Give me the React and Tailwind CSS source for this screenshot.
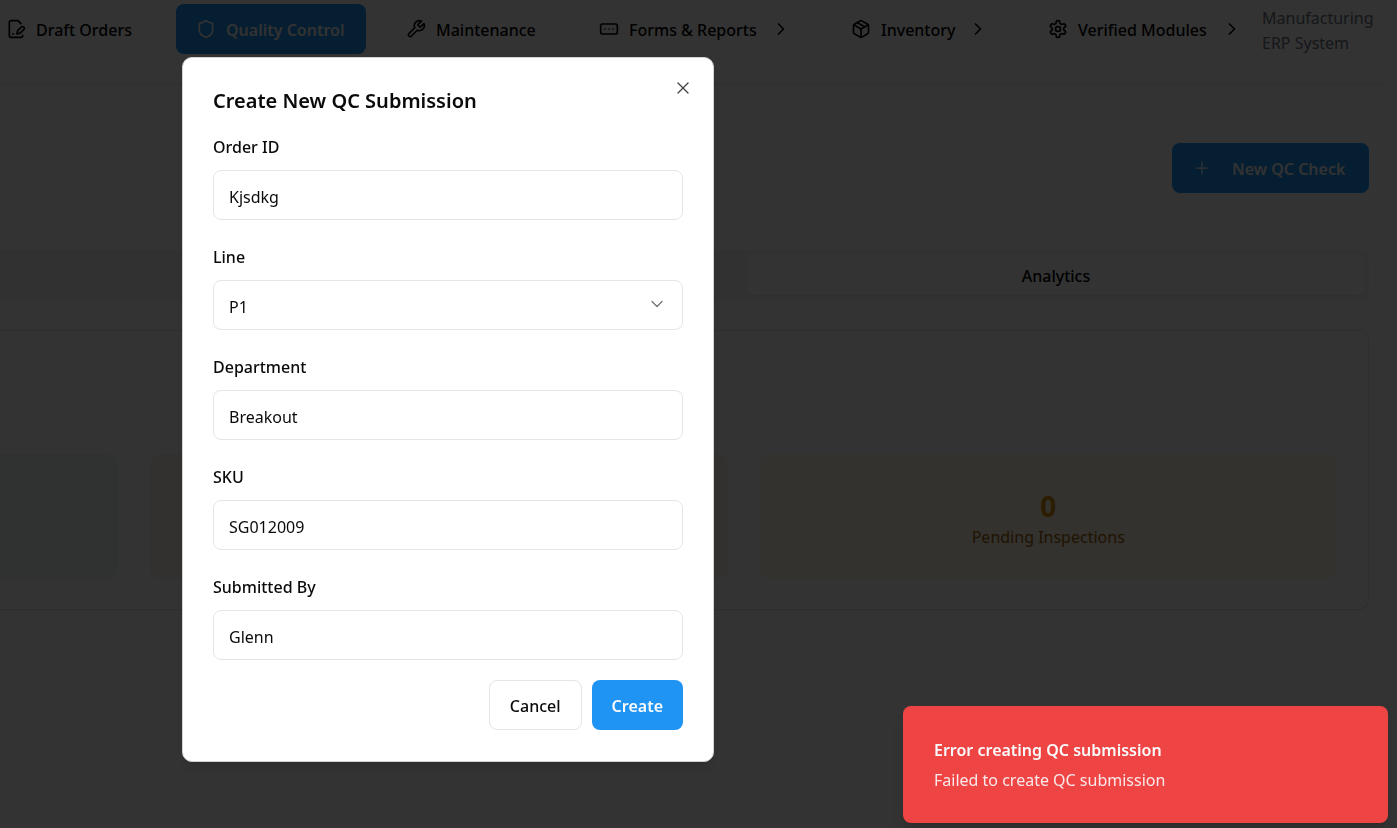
import { useState } from "react";
import { Shield, RectangleEllipsis, Package, ChevronRight, ChevronDown, Plus, X } from "lucide-react";

function OutlineIcon({ className, children }) {
  return (
    <svg
      className={className}
      viewBox="0 0 24 24"
      fill="none"
      stroke="currentColor"
      strokeWidth="2"
      strokeLinecap="round"
      strokeLinejoin="round"
      aria-hidden="true"
    >
      {children}
    </svg>
  );
}

function DraftIcon({ className }) {
  return (
    <OutlineIcon className={className}>
      <path d="M20 19.5v.5a2 2 0 0 1-2 2H6a2 2 0 0 1-2-2V4a2 2 0 0 1 2-2h8.5L18 5.5" />
      <path d="M8 18h1" />
      <path d="M18.42 9.61a2.1 2.1 0 1 1 2.97 2.97L16.95 17 13 18l.99-3.95 4.43-4.44Z" />
    </OutlineIcon>
  );
}

function WrenchIcon({ className }) {
  return (
    <OutlineIcon className={className}>
      <path d="M14.7 6.3a1 1 0 0 0 0 1.4l1.6 1.6a1 1 0 0 0 1.4 0l3.77-3.77a6 6 0 0 1-7.94 7.94l-6.91 6.91a2.12 2.12 0 0 1-3-3l6.91-6.91a6 6 0 0 1 7.94-7.94l-3.76 3.76z" />
    </OutlineIcon>
  );
}

function GearIcon({ className }) {
  return (
    <OutlineIcon className={className}>
      <path d="M12.22 2h-.44a2 2 0 0 0-2 2v.18a2 2 0 0 1-1 1.73l-.43.25a2 2 0 0 1-2 0l-.15-.08a2 2 0 0 0-2.73.73l-.22.38a2 2 0 0 0 .73 2.73l.15.1a2 2 0 0 1 1 1.72v.51a2 2 0 0 1-1 1.74l-.15.09a2 2 0 0 0-.73 2.73l.22.38a2 2 0 0 0 2.73.73l.15-.08a2 2 0 0 1 2 0l.43.25a2 2 0 0 1 1 1.73V20a2 2 0 0 0 2 2h.44a2 2 0 0 0 2-2v-.18a2 2 0 0 1 1-1.73l.43-.25a2 2 0 0 1 2 0l.15.08a2 2 0 0 0 2.73-.73l.22-.39a2 2 0 0 0-.73-2.73l-.15-.08a2 2 0 0 1-1-1.74v-.5a2 2 0 0 1 1-1.74l.15-.09a2 2 0 0 0 .73-2.73l-.22-.38a2 2 0 0 0-2.73-.73l-.15.08a2 2 0 0 1-2 0l-.43-.25a2 2 0 0 1-1-1.73V4a2 2 0 0 0-2-2z" />
      <circle cx="12" cy="12" r="3" />
    </OutlineIcon>
  );
}

const navItems = [
  { label: "Draft Orders", icon: DraftIcon, width: "min-w-[170px]" },
  { label: "Quality Control", icon: Shield, width: "min-w-[190px]", active: true },
  { label: "Maintenance", icon: WrenchIcon, width: "min-w-[173px]" },
  { label: "Forms & Reports", icon: RectangleEllipsis, width: "min-w-[232px]", expandable: true },
  { label: "Inventory", icon: Package, width: "min-w-[177px]", expandable: true },
  { label: "Verified Modules", icon: GearIcon, width: "min-w-[234px]", expandable: true },
];

function NavItem({ label, icon: Icon, width, active, expandable }) {
  return (
    <a
      href="#"
      aria-current={active ? "page" : undefined}
      className={`flex h-[50px] shrink-0 items-center gap-[10px] rounded-[8px] px-5 ${width} ${
        active ? "bg-[#2094f3] font-semibold text-gray-50" : "font-medium text-black"
      }`}
    >
      <Icon className="size-5 shrink-0" />
      <span className="pt-[2px] whitespace-nowrap">{label}</span>
      {expandable && <ChevronRight className="ml-auto size-5 shrink-0" />}
    </a>
  );
}

function Header() {
  return (
    <header className="mr-2 flex h-[85px] items-start overflow-hidden border-b border-[#ebebeb] pt-1">
      <nav aria-label="Main" className="-ml-[14px] flex shrink-0 gap-5">
        {navItems.map((item) => (
          <NavItem key={item.label} {...item} />
        ))}
      </nav>
      <p className="w-[120px] shrink-0 pt-[2px] leading-[25px] text-gray-500">Manufacturing ERP System</p>
    </header>
  );
}

function Dashboard() {
  return (
    <main className="pr-7">
      <div className="flex justify-end pt-[58px]">
        <button
          type="button"
          className="flex h-[50px] min-w-[197px] items-center gap-5 rounded-[8px] bg-[#2094f3] px-5 font-semibold text-gray-50"
        >
          <Plus className="size-5" strokeWidth={1.5} />
          <span className="pt-[2px]">New QC Check</span>
        </button>
      </div>
      <div role="tablist" className="mt-[57px] flex justify-end rounded-r-[8px] bg-[#f5f5f5] p-[5px]">
        <button
          type="button"
          role="tab"
          aria-selected="true"
          className="h-10 w-[616px] rounded-[6px] bg-white pt-[2px] font-medium text-black shadow-xs"
        >
          Analytics
        </button>
      </div>
      <section className="mt-[30px] rounded-r-[10px] border-y border-r border-[#e5e5e5] bg-white pt-[123px] pr-[31px] pb-[30px] shadow-xs">
        <div className="grid grid-cols-[118px_1fr_1fr] gap-8">
          <div className="rounded-r-[10px] bg-[#f0faf5]" />
          <div className="rounded-[10px] bg-[#fef4ea]" />
          <div className="flex h-[125px] flex-col items-center justify-center rounded-[10px] bg-[#fef9e7] pt-[4px]">
            <p className="text-[28px] leading-[38px] font-bold text-[#d99106]">0</p>
            <p className="leading-[25px] text-[#a16207]">Pending Inspections</p>
          </div>
        </div>
      </section>
    </main>
  );
}

const controlClass =
  "h-[50px] w-full rounded-[8px] border border-[#e5e5e5] bg-white px-[15px] pt-1 text-[#0a0a0a] outline-none";

function Field({ id, label, children }) {
  return (
    <div className="flex flex-col gap-[10px]">
      <label htmlFor={id} className="leading-[25px] font-medium">
        {label}
      </label>
      {children}
    </div>
  );
}

function TextField({ id, label, initial }) {
  const [value, setValue] = useState(initial);
  return (
    <Field id={id} label={label}>
      <input id={id} type="text" value={value} onChange={(e) => setValue(e.target.value)} className={controlClass} />
    </Field>
  );
}

function SubmissionDialog() {
  return (
    <div className="fixed inset-0 flex items-start overflow-auto bg-black/80 pt-[57px] pl-[182px]">
      <div
        role="dialog"
        aria-modal="true"
        aria-labelledby="dialog-title"
        className="relative w-[532px] rounded-[10px] border border-[#d4d4d4] bg-white px-[30px] pt-[30px] pb-[31px] text-[#0a0a0a] shadow-lg"
      >
        <h2 id="dialog-title" className="text-[20px] leading-[26px] font-semibold">
          Create New QC Submission
        </h2>
        <button type="button" aria-label="Close" className="absolute top-5 right-5 text-[#404040]">
          <X className="size-5" strokeWidth={1.5} />
        </button>
        <form className="mt-[21px]" onSubmit={(e) => e.preventDefault()}>
          <div className="flex flex-col gap-[25px]">
            <TextField id="order-id" label="Order ID" initial="Kjsdkg" />
            <Field id="line" label="Line">
              <div className="relative">
                <select id="line" defaultValue="P1" className={`${controlClass} appearance-none`}>
                  <option>P1</option>
                </select>
                <ChevronDown
                  className="pointer-events-none absolute top-[14px] right-4 size-5 text-[#737373]"
                  strokeWidth={1.5}
                />
              </div>
            </Field>
            <TextField id="department" label="Department" initial="Breakout" />
            <TextField id="sku" label="SKU" initial="SG012009" />
            <TextField id="submitted-by" label="Submitted By" initial="Glenn" />
          </div>
          <div className="mt-5 flex justify-end gap-[10px]">
            <button
              type="button"
              className="h-[50px] rounded-[8px] border border-[#e5e5e5] bg-white px-5 pt-[2px] font-medium"
            >
              Cancel
            </button>
            <button
              type="submit"
              className="h-[50px] rounded-[8px] bg-[#2094f3] px-5 pt-[2px] font-semibold text-gray-50"
            >
              Create
            </button>
          </div>
        </form>
      </div>
    </div>
  );
}

function Toast() {
  return (
    <div
      role="alert"
      className="fixed right-[9px] bottom-[5px] w-[485px] rounded-[8px] bg-[#ef4444] px-[31px] pt-[30px] pb-[28px] text-gray-50 shadow-lg"
    >
      <p className="leading-[29px] font-semibold">Error creating QC submission</p>
      <p className="leading-[30px] opacity-90">Failed to create QC submission</p>
    </div>
  );
}

export default function App() {
  return (
    <div className="min-h-screen overflow-x-hidden bg-white font-['Noto_Sans','Open_Sans',sans-serif] text-[16px]">
      <Header />
      <Dashboard />
      <SubmissionDialog />
      <Toast />
    </div>
  );
}
